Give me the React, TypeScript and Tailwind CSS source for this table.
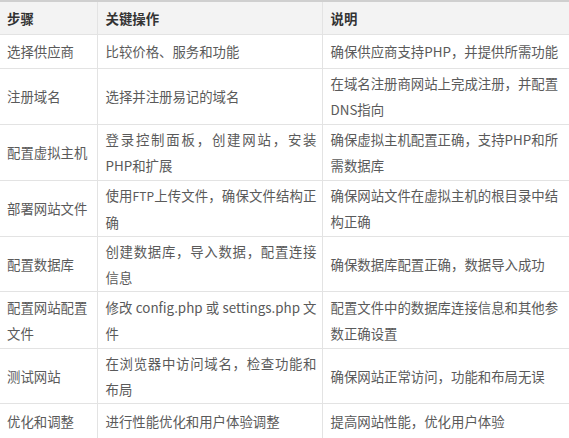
import type { ReactNode } from 'react'

const rows: { step: string; action: ReactNode; note: string; h: string }[] = [
  { step: '选择供应商', action: '比较价格、服务和功能', note: '确保供应商支持PHP，并提供所需功能', h: 'h-[34px]' },
  { step: '注册域名', action: '选择并注册易记的域名', note: '在域名注册商网站上完成注册，并配置DNS指向', h: 'h-[56px]' },
  { step: '配置虚拟主机', action: '登录控制面板，创建网站，安装PHP和扩展', note: '确保虚拟主机配置正确，支持PHP和所需数据库', h: 'h-[56px]' },
  {
    step: '部署网站文件',
    action: <>使用<span className="text-[12px]">FTP</span>上传文件，确保文件结构正确</>,
    note: '确保网站文件在虚拟主机的根目录中结构正确',
    h: 'h-[56px]',
  },
  { step: '配置数据库', action: '创建数据库，导入数据，配置连接信息', note: '确保数据库配置正确，数据导入成功', h: 'h-[55px]' },
  { step: '配置网站配置文件', action: '修改 config.php 或 settings.php 文件', note: '配置文件中的数据库连接信息和其他参数正确设置', h: 'h-[57px]' },
  { step: '测试网站', action: '在浏览器中访问域名，检查功能和布局', note: '确保网站正常访问，功能和布局无误', h: 'h-[55px]' },
  { step: '优化和调整', action: '进行性能优化和用户体验调整', note: '提高网站性能，优化用户体验', h: 'h-[35px]' },
]

export default function App() {
  return (
    <div className="w-[569px] h-[438px] bg-white overflow-hidden font-['Noto_Sans_CJK_SC',sans-serif] text-[13.4px] leading-[26px] text-[#5a5a5a]">
      <table className="w-[569px] table-fixed border-collapse border-t-2 border-t-[#cfcfcf]">
        <colgroup>
          <col className="w-[97px]" />
          <col className="w-[225px]" />
          <col className="w-[247px]" />
        </colgroup>
        <thead>
          <tr className="h-[33px] bg-[#f3f3f3] text-[#333]">
            <th className="text-left font-bold pl-[7px] pr-1 border-b border-r border-[#e3e3e3]">步骤</th>
            <th className="text-left font-bold pl-[8px] pr-1 border-b border-r border-[#e3e3e3]">关键操作</th>
            <th className="text-left font-bold pl-[8px] pr-1 border-b border-r border-[#e3e3e3]">说明</th>
          </tr>
        </thead>
        <tbody>
          {rows.map((r) => (
            <tr key={r.step} className={r.h}>
              <td className="align-middle pl-[7px] pr-[2px] py-0 border-b border-r border-[#e3e3e3]">{r.step}</td>
              <td className="align-middle pl-[8px] pr-[5px] py-0 border-b border-r border-[#e3e3e3] text-justify">{r.action}</td>
              <td className="align-middle pl-[8px] pr-[2px] py-0 border-b border-r border-[#e3e3e3]">{r.note}</td>
            </tr>
          ))}
        </tbody>
      </table>
    </div>
  )
}
